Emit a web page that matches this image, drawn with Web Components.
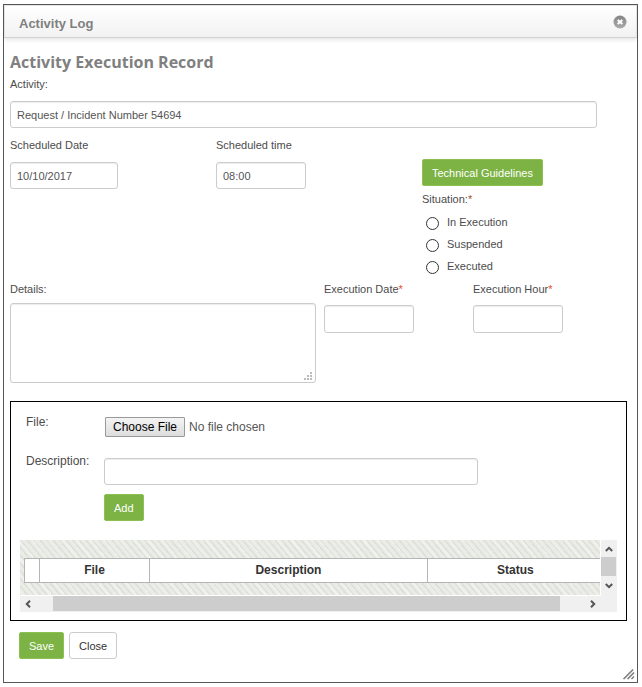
<!DOCTYPE html>
<html lang="en">
<head>
<meta charset="utf-8">
<title>Activity Log</title>
<style>
  body { margin: 4px 4px 4px 3px; background: #fff; color: #4c4c4c; font: 11px/16px "Liberation Sans", Arial, sans-serif; }
</style>
</head>
<body>
<activity-dialog>
  <activity-form></activity-form>
</activity-dialog>

<script>
const define = (name, html, setup) => customElements.define(name, class extends HTMLElement {
  connectedCallback() {
    if (this.shadowRoot) return;
    const t = document.createElement('template');
    t.innerHTML = '<style>*{box-sizing:border-box}</style>' + html;
    this.attachShadow({ mode: 'open' }).append(t.content.cloneNode(true));
    if (setup) setup(this, this.shadowRoot);
  }
});

/* Window frame with title bar, close button and resize grip */
define('activity-dialog', `
<style>
  :host { display: flex; flex-direction: column; position: relative; box-sizing: border-box; min-height: calc(100vh - 8px); border: 1px solid #58585b; background: #fff; }
  header { display: flex; align-items: center; justify-content: space-between; height: 33px; padding: 0 9px 0 14px; background: linear-gradient(#fff, #f2f2f2); border: 1px solid #e4e4e4; border-bottom-color: #d0d0d0; box-shadow: 0 2px 4px rgba(0,0,0,.1); }
  h1 { margin: 0; padding-top: 4px; font: bold 13px/18px "Liberation Sans", Arial, sans-serif; color: #808080; }
  button { display: block; border: 0; padding: 0; background: none; width: 14px; height: 14px; }
  svg { display: block; }
  main { padding: 14px 9px 16px 6px; }
  .grip { position: absolute; right: 2px; bottom: 2px; }
</style>
<header><h1>Activity Log</h1>
<button type="button" aria-label="Close dialog"><svg width="14" height="14" viewBox="0 0 14 14"><defs><linearGradient id="g" x2="0" y2="1"><stop stop-color="#858585"/><stop offset="1" stop-color="#ababab"/></linearGradient></defs><circle cx="7" cy="7" r="6.5" fill="url(#g)"/><path d="M4.7 4.9 9.3 9.1M9.3 4.9 4.7 9.1" stroke="#fff" stroke-width="2"/></svg></button></header>
<main><slot></slot></main>
<svg class="grip" width="12" height="12" viewBox="0 0 12 12"><path d="M.5 11 10 1.500M4.500 11 11 4.500M8.500 11 11 8.500" stroke="#777" stroke-width="1.300"/><path d="M1.500 11.500 11 2M5.500 11.500 11.500 5.500" stroke="#ccc" stroke-width=".7"/></svg>`);

/* Labelled text box or text area */
define('text-field', `
<style>
  :host { display: block; }
  label { display: block; }
  b { font-weight: normal; color: #f04a24; }
  input, textarea { display: block; width: var(--w, 100%); height: var(--h, 27px); margin: var(--gap, 9px) 0 0; padding: 0 6px; border: 1px solid #ccc; border-radius: 3px; background: #fff; box-shadow: inset 0 1px 1px rgba(0,0,0,.075); color: #555; font: inherit; outline: 0; }
  .area { position: relative; }
  textarea { height: 80px; resize: none; padding: 5px 6px; }
  svg { position: absolute; right: 4px; bottom: 3px; }
</style>
<label for="f"></label>`, (host, root) => {
  const label = root.querySelector('label');
  const text = host.getAttribute('label');
  if (text) label.textContent = text; else label.remove();
  if (host.hasAttribute('required')) label.insertAdjacentHTML('beforeend', '<b>*</b>');
  if (host.hasAttribute('multiline')) {
    root.append(Object.assign(document.createElement('div'), { className: 'area', innerHTML:
      '<textarea id="f"></textarea><svg width="8" height="8" fill="#bbb"><path d="M6 0h2v2H6zM3 3h2v2H3zM6 3h2v2H6zM0 6h2v2H0zM3 6h2v2H3zM6 6h2v2H6z"/></svg>' }));
  } else {
    const input = Object.assign(document.createElement('input'), { id: 'f', type: 'text', value: host.getAttribute('value') || '' });
    if (!text) input.setAttribute('aria-label', host.getAttribute('name'));
    root.append(input);
  }
});

define('action-button', `
<style>
  :host { display: inline-block; }
  button { display: block; height: 27px; padding: 0 9px; border: 1px solid #8cc152; border-radius: 2px; background: #7cb344; color: #fff; font: inherit; white-space: nowrap; }
  :host([plain]) button { background: #fff; border-color: #ccc; border-radius: 3px; color: #333; }
</style>
<button type="button"><slot></slot></button>`);

define('situation-group', `
<style>
  :host { display: block; }
  fieldset { border: 0; margin: 0; padding: 0; min-width: 0; }
  legend { padding: 0; margin-bottom: 5px; }
  b { font-weight: normal; color: #a0522d; }
  label { display: flex; height: 22px; padding-left: 4px; gap: 8px; }
  input { appearance: none; width: 13px; height: 13px; margin: 5px 0 0; border: 1px solid #333; border-radius: 50%; background: #fff; }
  input:checked { background: radial-gradient(#333 3px, #fff 4px); }
  span { padding-top: 2px; }
</style>
<fieldset><legend>Situation:<b>*</b></legend>
<label><input type="radio" name="s"><span>In Execution</span></label>
<label><input type="radio" name="s"><span>Suspended</span></label>
<label><input type="radio" name="s"><span>Executed</span></label></fieldset>`);

/* Attached files list inside a scrolling pane */
define('file-table', `
<style>
  :host { display: grid; grid-template-columns: minmax(0,1fr) 16px; grid-template-rows: 56px 16px; background: #f0f0f0; }
  .pane { padding: 18px 0 0 4px; border-right: 1px solid #fff; border-bottom: 1px solid #fff; overflow: hidden;
    background: repeating-linear-gradient(50deg, rgba(205,203,190,.4) 0 1px, transparent 2px 5px), repeating-linear-gradient(50deg, rgba(255,255,255,.3) 0 2px, transparent 4px 11px), #e9ece7; }
  table { width: calc(100% + 4px); border-collapse: collapse; table-layout: fixed; background: #fff; color: #333; font-size: 12px; }
  th { height: 24px; padding: 0 0 2px; border: 1px solid #b5b5b5; line-height: 16px; }
  button { border: 0; padding: 0; background: none; display: grid; place-items: center; }
  svg { display: block; fill: none; stroke: #555; stroke-width: 2; }
  .v { display: grid; grid-template-rows: 17px 19px 20px; }
  .h { display: grid; grid-template-columns: 16px 17px minmax(0,1fr) 24px 17px; }
  .h { grid-column: 1 / -1; padding-right: 16px; }
  .thumb { background: #cdcdcd; }
  .v .thumb { margin-right: 1px; }
  .h .thumb { margin-bottom: 1px; }
</style>
<div class="pane"><table><colgroup><col style="width:15px"><col style="width:19%"><col style="width:48%"><col></colgroup>
<thead><tr><th></th><th>File</th><th>Description</th><th>Status</th></tr></thead></table></div>
<div class="v"><button type="button" aria-label="Scroll up"><svg width="8" height="6"><path d="M.8 5 4 1.800 7.200 5"/></svg></button><div class="thumb"></div><button type="button" aria-label="Scroll down"><svg width="8" height="6"><path d="M.8 1 4 4.200 7.200 1"/></svg></button></div>
<div class="h"><button type="button" aria-label="Scroll left"><svg width="6" height="8"><path d="M5 .8 1.800 4 5 7.200"/></svg></button><span></span><div class="thumb"></div><span></span><button type="button" aria-label="Scroll right"><svg width="6" height="8"><path d="M1 .8 4.200 4 1 7.200"/></svg></button></div>`);

define('file-panel', `
<style>
  :host { display: block; box-sizing: border-box; border: 1px solid #000; padding: 12px 9px 8px; font-size: 12px; }
  .rows { display: grid; grid-template-columns: 78px minmax(0,1fr); padding-left: 6px; }
  input { display: block; height: 20px; margin: 3px 0 0 1px; color: #555; font: inherit; line-height: 18px; }
  input::file-selector-button { box-sizing: border-box; width: 80px; height: 20px; margin: 0 4px 0 0; padding: 0; border: 1px solid #999; border-radius: 1px; background: linear-gradient(#f4f4f4, #ddd); color: #000; font: inherit; }
  label { display: block; }
  .rows > span { margin-top: 16px; }
  text-field { --gap: 0; --w: 73%; margin-top: 21px; }
  action-button { grid-column: 2; margin-top: 9px; font-size: 11px; }
  file-table { margin-top: 19px; }
</style>
<div class="rows"><label for="file">File:</label><input id="file" type="file">
<span>Description:</span><text-field name="Description"></text-field>
<action-button>Add</action-button></div>
<file-table></file-table>`);

define('activity-form', `
<style>
  :host { display: block; }
  h2 { margin: 0; font: bold 16px/20px "Open Sans", "Noto Sans", sans-serif; color: #808080; }
  h2 + text-field { margin-top: 4px; --w: 95%; }
  .schedule { display: grid; grid-template-columns: repeat(3, minmax(0,1fr)); margin-top: 9px; }
  .date { --w: 108px; } .time { --w: 90px; }
  .schedule > div { padding-top: 22px; }
  situation-group { margin-top: 5px; }
  .details { display: grid; grid-template-columns: 306fr 141fr 155fr; column-gap: 8px; margin-top: 3px; }
  .details > text-field { --w: 90px; --h: 28px; --gap: 8px; }
  .details > [multiline] { --w: 100%; --gap: 6px; }
  file-panel { margin: 18px 1px 0 0; }
  footer { display: flex; gap: 5px; padding: 11px 9px 0; }
</style>
<h2>Activity Execution Record</h2>
<text-field label="Activity:" value="Request / Incident Number 54694"></text-field>
<div class="schedule">
  <text-field class="date" label="Scheduled Date" value="10/10/2017"></text-field>
  <text-field class="time" label="Scheduled time" value="08:00"></text-field>
  <div><action-button>Technical Guidelines</action-button><situation-group></situation-group></div>
</div>
<div class="details">
  <text-field multiline label="Details:"></text-field>
  <text-field required label="Execution Date"></text-field>
  <text-field required label="Execution Hour"></text-field>
</div>
<file-panel></file-panel>
<footer><action-button>Save</action-button><action-button plain>Close</action-button></footer>`);
</script>
</body>
</html>
